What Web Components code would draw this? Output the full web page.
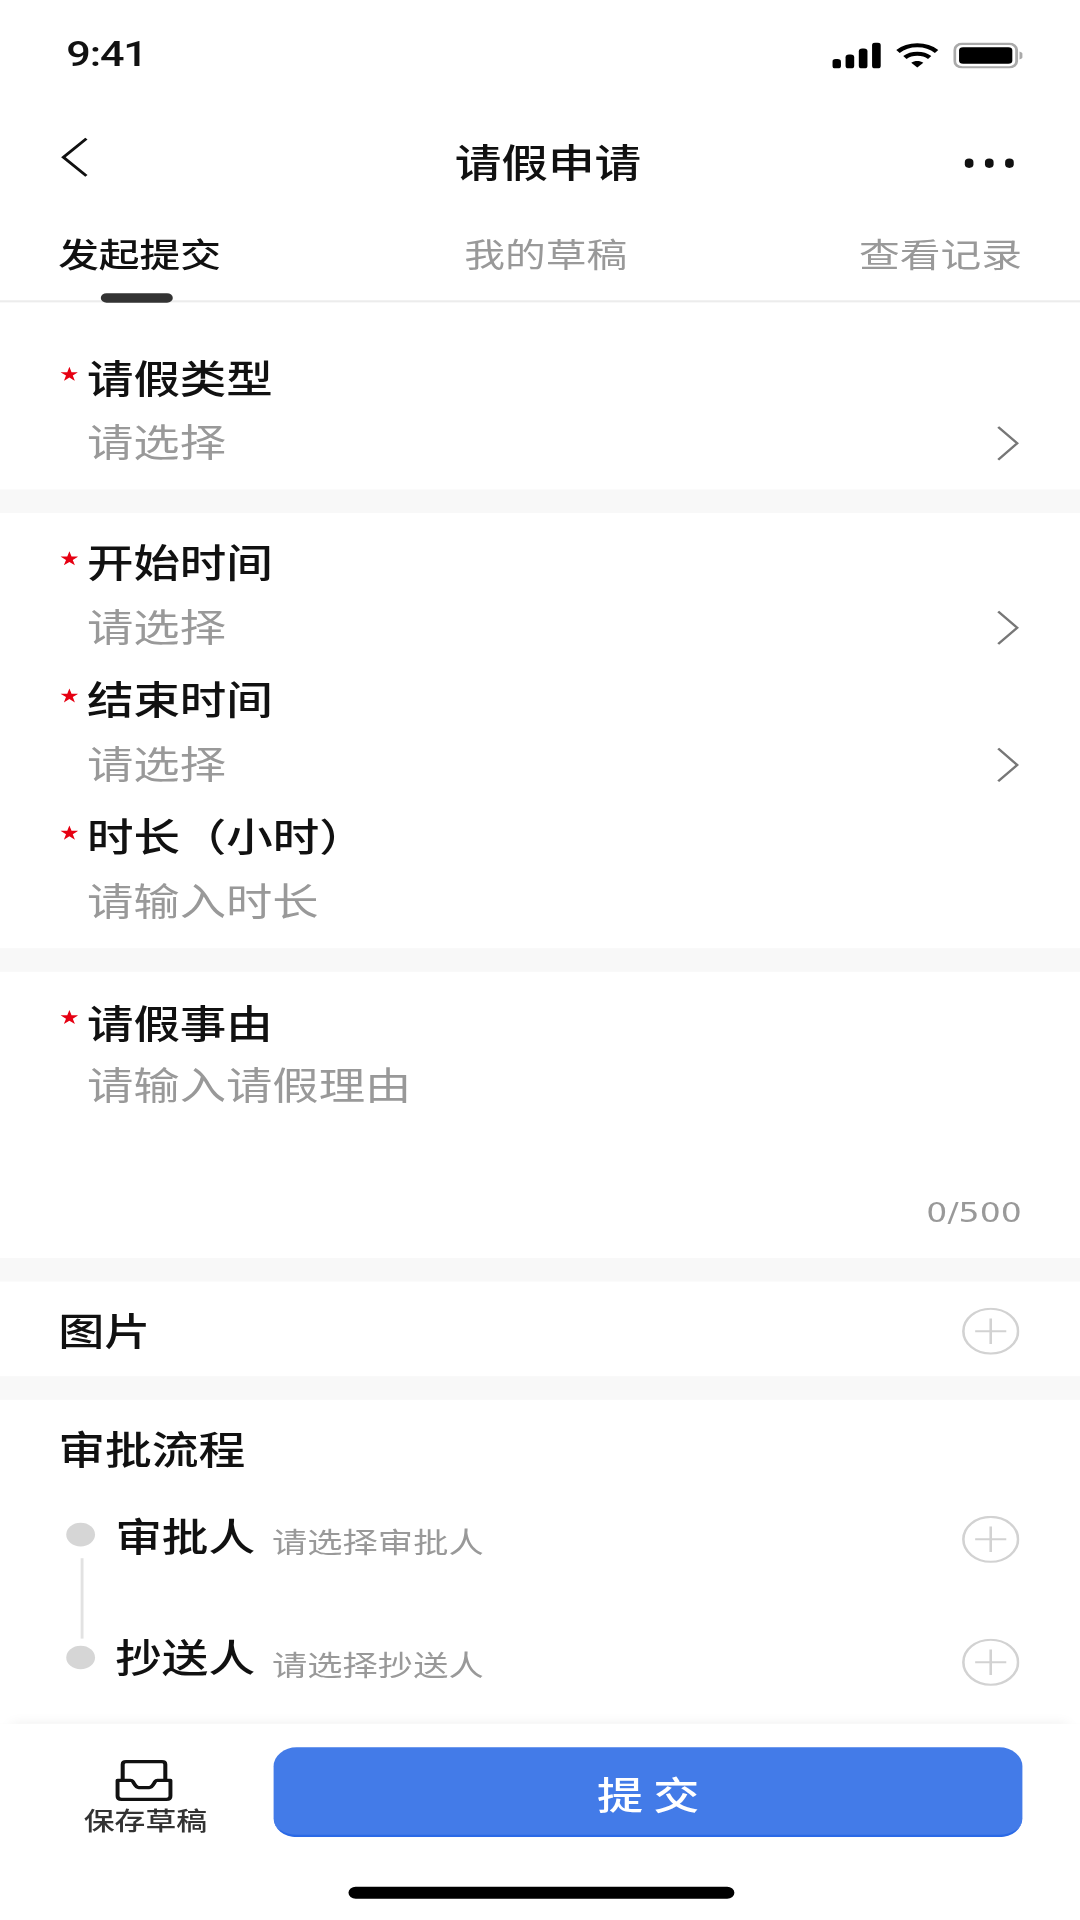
<!DOCTYPE html>
<html lang="zh-CN">
<head>
<meta charset="utf-8">
<title>请假申请</title>
<style>
  html, body { margin: 0; padding: 0; background: #fff; overflow: hidden; }
  body { width: 1080px; height: 1920px; font-family: "Noto Sans CJK SC", "Noto Sans", sans-serif; }
</style>
</head>
<body>
<app-screen>
  <status-bar></status-bar>
  <nav-bar title="请假申请"></nav-bar>
  <tab-bar></tab-bar>
  <main-scroll>
    <form-section top="18.25" bottom="2.75">
      <form-field label="请假类型" placeholder="请选择" chevron></form-field>
    </form-section>
    <form-section top="7.5" bottom="2.5">
      <form-field label="开始时间" placeholder="请选择" chevron></form-field>
      <form-field label="结束时间" placeholder="请选择" chevron></form-field>
      <form-field label="时长（小时）" placeholder="请输入时长"></form-field>
    </form-section>
    <form-section top="7.65" bottom="11.35">
      <form-field label="请假事由" placeholder="请输入请假理由"></form-field>
      <char-count>0/500</char-count>
    </form-section>
    <form-section>
      <add-row>图片</add-row>
    </form-section>
    <form-section top="9" last>
      <flow-title>审批流程</flow-title>
      <approval-row name="审批人" hint="请选择审批人" lift="2.6" connector></approval-row>
      <approval-row name="抄送人" hint="请选择抄送人" lift="3.6"></approval-row>
    </form-section>
  </main-scroll>
  <submit-bar></submit-bar>
  <home-indicator></home-indicator>
</app-screen>

<script>
// the reference is a 375x812 screen stretched to 1080x1920, so the whole screen is scaled
class AppScreen extends HTMLElement {
  constructor() {
    super();
    this.attachShadow({ mode: 'open' });
    this.shadowRoot.innerHTML = `
      <style>
        :host {
          display: flex;
          flex-direction: column;
          width: 375px;
          height: 812px;
          background: #fff;
          color: #111;
          transform-origin: 0 0;
          transform: scale(2.88, 2.3645);
          filter: blur(0.2px);
          font-family: "Noto Sans CJK SC", "Noto Sans", sans-serif;
        }
      </style>
      <slot></slot>
    `;
  }
}

class StatusBar extends HTMLElement {
  constructor() {
    super();
    this.attachShadow({ mode: 'open' });
    this.shadowRoot.innerHTML = `
      <style>
        :host {
          display: flex;
          align-items: center;
          height: 44px;
          box-sizing: border-box;
          padding: 2px 20px 0 23px;
          flex: none;
        }
        .time {
          font: 500 15px/1 "Roboto", "Liberation Sans", sans-serif;
          letter-spacing: -0.4px;
          color: #111;
        }
        .icons { margin-left: auto; display: flex; align-items: center; gap: 5px; }
        svg { display: block; }
      </style>
      <span class="time">9:41</span>
      <div class="icons">
        <svg width="17" height="11" viewBox="0 0 17 11" fill="#000">
          <rect x="0" y="7" width="3" height="4" rx="1.2"/>
          <rect x="4.6" y="5" width="3" height="6" rx="1.2"/>
          <rect x="9.2" y="2.5" width="3" height="8.5" rx="1.2"/>
          <rect x="13.8" y="0" width="3" height="11" rx="1.2"/>
        </svg>
        <svg width="15" height="11" viewBox="0 0 15 11" fill="none" stroke="#000" stroke-width="1.7">
          <path d="M0.8 3.8C4.4 0.3 10.6 0.3 14.2 3.8"/>
          <path d="M3.2 6.3C5.5 4.2 9.5 4.2 11.8 6.3"/>
          <path d="M7.5 10.6L5.4 8.5C6.6 7.6 8.4 7.6 9.6 8.5Z" fill="#000" stroke="none"/>
        </svg>
        <svg width="24.5" height="11" viewBox="0 0 24.5 11">
          <rect x="0.5" y="0.5" width="21.5" height="10" rx="2.6" fill="none" stroke="#aaa"/>
          <rect x="2" y="2" width="18.5" height="7" rx="1.4" fill="#000"/>
          <path d="M23 3.8C24 4.2 24.5 4.8 24.5 5.5S24 6.8 23 7.2Z" fill="#aaa"/>
        </svg>
      </div>
    `;
  }
}

class NavBar extends HTMLElement {
  constructor() {
    super();
    this.attachShadow({ mode: 'open' });
    this.shadowRoot.innerHTML = `
      <style>
        :host {
          display: flex;
          align-items: center;
          justify-content: space-between;
          height: 50px;
          padding: 0 23px 0 21px;
          flex: none;
        }
        .back { margin-top: -6px; display: block; }
        .title {
          font-size: 16.2px;
          font-weight: 500;
          line-height: 24px;
          padding-bottom: 2px;
          color: #111;
          margin-left: 15px;
        }
        .more { display: flex; gap: 3.5px; }
        .more i { width: 3.5px; height: 3.5px; border-radius: 50%; background: #111; }
      </style>
      <svg class="back" width="10" height="17" viewBox="0 0 10 17" fill="none" stroke="#111" stroke-width="1.1">
        <path d="M9 0.6L1 8.5L9 16.4"/>
      </svg>
      <span class="title">${this.getAttribute('title')}</span>
      <div class="more"><i></i><i></i><i></i></div>
    `;
  }
}

class TabBar extends HTMLElement {
  constructor() {
    super();
    this.attachShadow({ mode: 'open' });
    this.shadowRoot.innerHTML = `
      <style>
        :host {
          display: flex;
          justify-content: space-between;
          height: 34px;
          box-sizing: border-box;
          padding: 0 20.2px;
          border-bottom: 1px solid #ececec;
          flex: none;
        }
        .tab {
          position: relative;
          font-size: 14.15px;
          line-height: 26px;
          color: #999;
        }
        .tab.mid { margin-left: 4px; }
        .tab.on { color: #111; font-weight: 500; }
        .tab.on::after {
          content: "";
          position: absolute;
          left: 14.7px;
          bottom: -0.5px;
          width: 25.5px;
          height: 3.5px;
          border-radius: 2px;
          background: #333;
        }
      </style>
      <span class="tab on">发起提交</span>
      <span class="tab mid">我的草稿</span>
      <span class="tab">查看记录</span>
    `;
  }
}

class MainScroll extends HTMLElement {
  constructor() {
    super();
    this.attachShadow({ mode: 'open' });
    this.shadowRoot.innerHTML = `
      <style>
        :host {
          display: flex;
          flex-direction: column;
          gap: 10px;
          flex: 1;
          min-height: 0;
          background: #f8f8f8;
        }
      </style>
      <slot></slot>
    `;
  }
}

class FormSection extends HTMLElement {
  constructor() {
    super();
    this.attachShadow({ mode: 'open' });
    this.shadowRoot.innerHTML = `
      <style>
        :host { display: block; background: #fff; }
        :host([last]) { flex: 1; }
      </style>
      <slot></slot>
    `;
    this.style.paddingTop = (this.getAttribute('top') || 0) + 'px';
    this.style.paddingBottom = (this.getAttribute('bottom') || 0) + 'px';
  }
}

class FormField extends HTMLElement {
  constructor() {
    super();
    this.attachShadow({ mode: 'open' });
    const chevron = this.hasAttribute('chevron') ? `
      <svg class="chev" width="8" height="15" viewBox="0 0 8 15" fill="none" stroke="#777" stroke-width="0.9">
        <path d="M0.6 0.6L7.2 7.5L0.6 14.4"/>
      </svg>` : '';
    this.shadowRoot.innerHTML = `
      <style>
        :host {
          display: block;
          height: 58px;
          box-sizing: border-box;
          padding: 0 21px 3px 20.8px;
        }
        .label {
          display: flex;
          align-items: center;
          height: 27.5px;
          font-size: 16.15px;
          font-weight: 500;
          color: #111;
        }
        .label span { padding-bottom: 1.6px; }
        .star { width: 6.2px; height: 6.5px; margin: -4px 3.2px 0 0; flex: none; }
        .value {
          display: flex;
          align-items: center;
          justify-content: space-between;
          height: 27.5px;
          padding-left: 9.4px;
          font-size: 16.1px;
          color: #999;
        }
        .value span { padding-bottom: 3px; }
        .chev { display: block; }
      </style>
      <div class="label">
        <svg class="star" viewBox="0 0 10 10" fill="#e60012"><path d="M5 0L6.2 3.6H10L6.9 5.9L8.1 9.6L5 7.3L1.9 9.6L3.1 5.9L0 3.6H3.8Z"/></svg>
        <span>${this.getAttribute('label')}</span>
      </div>
      <div class="value"><span>${this.getAttribute('placeholder')}</span>${chevron}</div>
    `;
  }
}

class CharCount extends HTMLElement {
  constructor() {
    super();
    this.attachShadow({ mode: 'open' });
    this.shadowRoot.innerHTML = `
      <style>
        :host {
          display: block;
          margin-top: 28.3px;
          padding-right: 20.2px;
          text-align: right;
          font: 11.5px/16px "DejaVu Sans", "Noto Sans", sans-serif;
          color: #999;
        }
      </style>
      <slot></slot>
    `;
  }
}

class PlusCircle extends HTMLElement {
  constructor() {
    super();
    this.attachShadow({ mode: 'open' });
    this.shadowRoot.innerHTML = `
      <style>
        :host { display: block; width: 20px; height: 20px; flex: none; }
        svg { display: block; }
      </style>
      <svg width="20" height="20" viewBox="0 0 20 20" fill="none" stroke="#d2d2d2" stroke-width="0.9">
        <circle cx="10" cy="10" r="9.5"/>
        <path d="M4.6 10H15.4M10 4.6V15.4"/>
      </svg>
    `;
  }
}

class AddRow extends HTMLElement {
  constructor() {
    super();
    this.attachShadow({ mode: 'open' });
    this.shadowRoot.innerHTML = `
      <style>
        :host {
          display: flex;
          align-items: center;
          justify-content: space-between;
          height: 40px;
          padding: 2px 21px 0 20.2px;
          box-sizing: border-box;
          font-size: 16px;
          font-weight: 500;
          color: #111;
        }
        span { padding-bottom: 2px; }
      </style>
      <span><slot></slot></span>
      <plus-circle></plus-circle>
    `;
  }
}

class FlowTitle extends HTMLElement {
  constructor() {
    super();
    this.attachShadow({ mode: 'open' });
    this.shadowRoot.innerHTML = `
      <style>
        :host {
          display: block;
          padding: 0 0 1px 20.2px;
          margin-top: -1px;
          font-size: 16.25px;
          font-weight: 500;
          line-height: 24px;
          color: #111;
        }
      </style>
      <slot></slot>
    `;
  }
}

class ApprovalRow extends HTMLElement {
  constructor() {
    super();
    this.attachShadow({ mode: 'open' });
    const lift = parseFloat(this.getAttribute('lift') || 0) * 2;
    this.shadowRoot.innerHTML = `
      <style>
        :host {
          position: relative;
          display: flex;
          align-items: center;
          height: 52px;
          padding: 0 21px 0 23px;
          box-sizing: border-box;
        }
        :host([connector])::after {
          content: "";
          position: absolute;
          left: 27.6px;
          top: 33.5px;
          width: 1px;
          height: 34.5px;
          background: #e2e2e2;
        }
        .dot {
          width: 10px;
          height: 10px;
          border-radius: 50%;
          background: #d6d6d6;
          margin: -4px 7px 0 0;
          flex: none;
        }
        .name { font-size: 16.2px; font-weight: 500; color: #111; margin-bottom: ${lift}px; }
        .hint { font-size: 12.25px; color: #999; margin: 2px 0 0 5.9px; flex: 1; }
      </style>
      <span class="dot"></span>
      <span class="name">${this.getAttribute('name')}</span>
      <span class="hint">${this.getAttribute('hint')}</span>
      <plus-circle></plus-circle>
    `;
  }
}

class SubmitBar extends HTMLElement {
  constructor() {
    super();
    this.attachShadow({ mode: 'open' });
    this.shadowRoot.innerHTML = `
      <style>
        :host {
          display: flex;
          align-items: flex-start;
          height: 59px;
          box-sizing: border-box;
          padding: 9.7px 20.2px 0 29px;
          background: #fff;
          flex: none;
          box-shadow: 0 -3px 5px -4px rgba(0,0,0,.1);
          position: relative;
        }
        .save {
          width: 43px;
          margin-right: 23.3px;
          display: flex;
          flex-direction: column;
          align-items: center;
          padding-top: 5.3px;
          font-size: 10.7px;
          line-height: 14px;
          font-weight: 500;
          color: #333;
        }
        .save svg { display: block; margin: 0 1px 1px 0; }
        .btn {
          flex: 1;
          height: 38.3px;
          box-sizing: border-box;
          padding-left: 3.5px;
          border-radius: 8px;
          background: #437be8;
          border-bottom: 1px solid #2a69e6;
          color: #fff;
          font-size: 16px;
          font-weight: 500;
          line-height: 39px;
          letter-spacing: 3.5px;
          text-align: center;
        }
      </style>
      <div class="save">
        <svg width="20" height="18" viewBox="0 0 20 18" fill="none" stroke="#111" stroke-width="1.4" stroke-linejoin="round">
          <path d="M2.6 9V2.2C2.6 1.4 3 1 3.8 1H16.2C17 1 17.4 1.4 17.4 2.2V9"/>
          <path d="M0.8 9H5.4C6.6 9 6.6 12 8.2 12H11.8C13.4 12 13.4 9 14.6 9H19.2V15.6C19.2 16.5 18.7 17 17.8 17H2.2C1.3 17 0.8 16.5 0.8 15.6Z"/>
        </svg>
        <span>保存草稿</span>
      </div>
      <div class="btn">提交</div>
    `;
  }
}

class HomeIndicator extends HTMLElement {
  constructor() {
    super();
    this.attachShadow({ mode: 'open' });
    this.shadowRoot.innerHTML = `
      <style>
        :host {
          display: flex;
          justify-content: center;
          height: 24px;
          padding-top: 9.5px;
          box-sizing: border-box;
          background: #fff;
          flex: none;
        }
        i { display: block; width: 134px; height: 5px; border-radius: 3px; background: #000; }
      </style>
      <i></i>
    `;
  }
}

customElements.define('app-screen', AppScreen);
customElements.define('status-bar', StatusBar);
customElements.define('nav-bar', NavBar);
customElements.define('tab-bar', TabBar);
customElements.define('main-scroll', MainScroll);
customElements.define('form-section', FormSection);
customElements.define('form-field', FormField);
customElements.define('char-count', CharCount);
customElements.define('plus-circle', PlusCircle);
customElements.define('add-row', AddRow);
customElements.define('flow-title', FlowTitle);
customElements.define('approval-row', ApprovalRow);
customElements.define('submit-bar', SubmitBar);
customElements.define('home-indicator', HomeIndicator);
</script>
</body>
</html>
